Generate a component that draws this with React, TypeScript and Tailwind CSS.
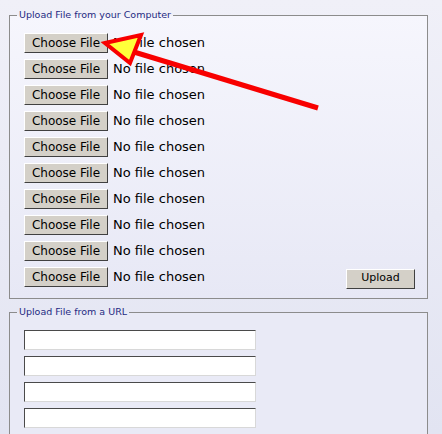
const ROWS = Array.from({ length: 10 }, (_, i) => i);
const URL_ROWS = Array.from({ length: 5 }, (_, i) => i);

function FilePicker({ last }: { last?: boolean }) {
  return (
    <div className="flex h-[20px] items-center">
      <div className="flex h-[20px] w-[84px] items-center justify-center border border-t-white border-l-white border-r-[#404040] border-b-[#404040] bg-[#d4d0c8] text-[12px] text-black">
        Choose File
      </div>
      <span className="ml-[5px] text-[13px] text-black">No file chosen</span>
      {last && (
        <div className="ml-auto mt-[3px] flex h-[20px] w-[69px] items-center justify-center border border-t-white border-l-white border-r-[#404040] border-b-[#404040] bg-[#d4d0c8] text-[11px] text-black">
          Upload
        </div>
      )}
    </div>
  );
}

function Arrow() {
  return (
    <svg
      className="pointer-events-none absolute left-0 top-0"
      width="442"
      height="434"
      viewBox="0 0 442 434"
    >
      <line x1="318" y1="108" x2="134" y2="52" stroke="#f80000" strokeWidth="5" />
      <polygon
        points="105,43 141,35 130,63"
        fill="#ffff3a"
        stroke="#f80000"
        strokeWidth="4"
        strokeLinejoin="miter"
      />
    </svg>
  );
}

export default function App() {
  return (
    <div className="relative h-[434px] w-[442px] overflow-hidden bg-gradient-to-b from-[#f0f0f8] to-[#e2e4f2] pl-[9px] pr-[14px] pt-[9px] font-['DejaVu_Sans',sans-serif]">
      <fieldset className="border border-[#8c8c8c] bg-gradient-to-b from-[#f6f6fd] to-[#e7e8f5] pb-[11px] pl-[14px] pr-[12px] pt-[12px]">
        <legend className="-ml-[7px] px-[2px] text-[9.5px] leading-[12px] text-[#1e2a82]">
          Upload File from your Computer
        </legend>
        <div className="flex flex-col gap-[6px]">
          {ROWS.map((i) => (
            <FilePicker key={i} last={i === ROWS.length - 1} />
          ))}
        </div>
      </fieldset>

      <fieldset className="mt-[7px] border border-[#8c8c8c] bg-[#e9eaf6] pl-[14px] pr-[12px] pt-[12px]">
        <legend className="-ml-[7px] px-[2px] text-[9.5px] leading-[12px] text-[#1e2a82]">
          Upload File from a URL
        </legend>
        <div className="flex flex-col gap-[6px]">
          {URL_ROWS.map((i) => (
            <div
              key={i}
              className="h-[20px] w-[232px] border border-t-[#4a4a4a] border-l-[#4a4a4a] border-r-[#d8d8d8] border-b-[#d8d8d8] bg-white"
            />
          ))}
        </div>
      </fieldset>

      <Arrow />
    </div>
  );
}
